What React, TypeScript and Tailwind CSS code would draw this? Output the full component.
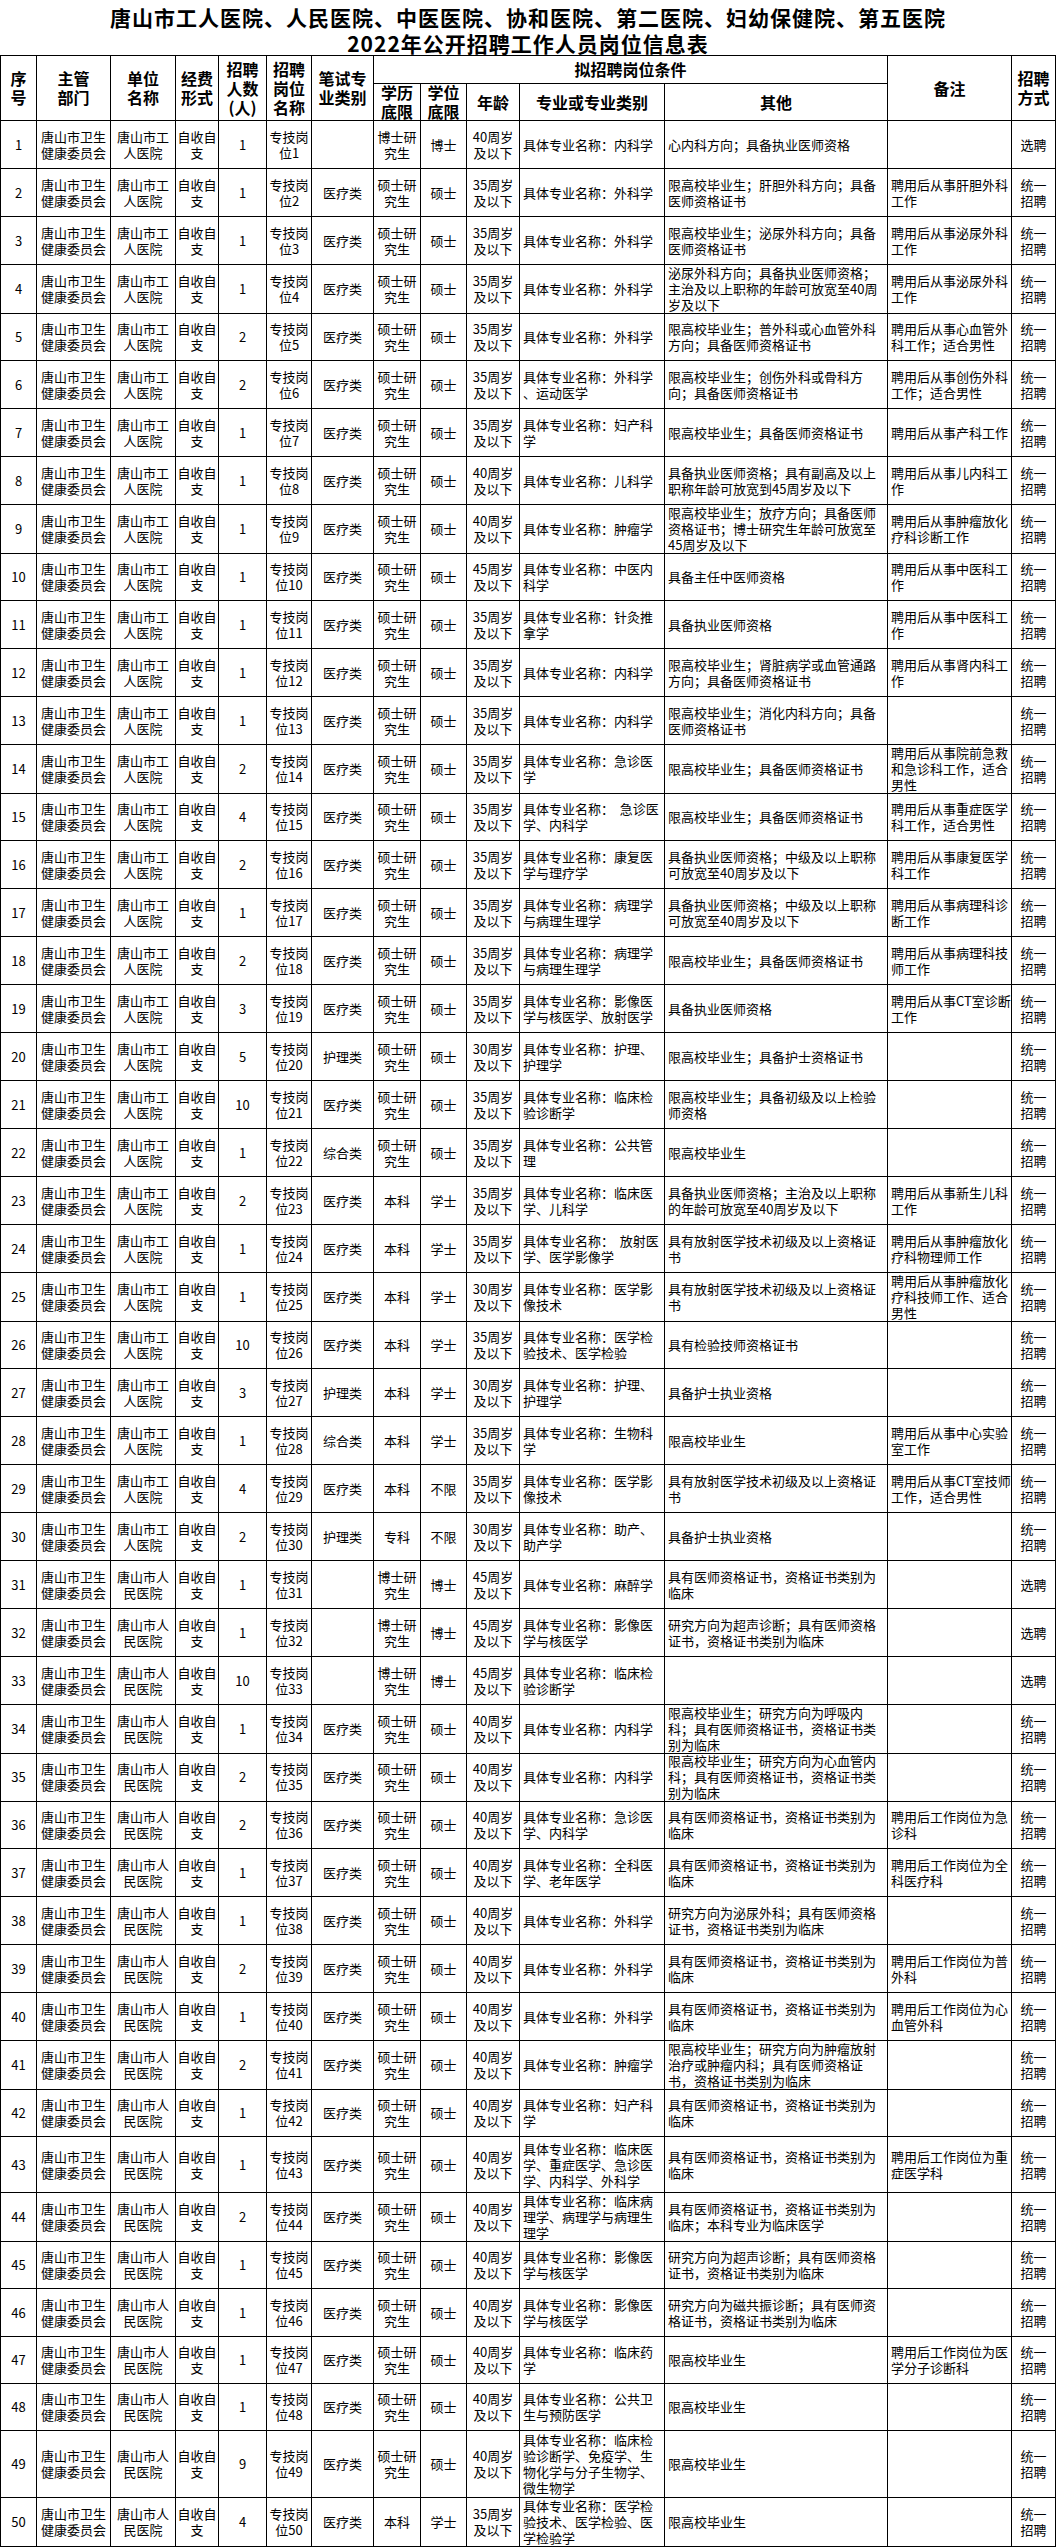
import React from "react";

type Row = [number, string, string, number, string, string, string, string];

const M = "具体专业名称：";
const LC = "具有医师资格证书，资格证书类别为|临床";

const DATA: Row[] = [
  [1, "", "B", 40, M + "内科学", "心内科方向；具备执业医师资格", "", "X"],
  [1, "医疗类", "S", 35, M + "外科学", "限高校毕业生；肝胆外科方向；具备|医师资格证书", "聘用后从事肝胆外科|工作", "T"],
  [1, "医疗类", "S", 35, M + "外科学", "限高校毕业生；泌尿外科方向；具备|医师资格证书", "聘用后从事泌尿外科|工作", "T"],
  [1, "医疗类", "S", 35, M + "外科学", "泌尿外科方向；具备执业医师资格；|主治及以上职称的年龄可放宽至40周|岁及以下", "聘用后从事泌尿外科|工作", "T"],
  [2, "医疗类", "S", 35, M + "外科学", "限高校毕业生；普外科或心血管外科|方向；具备医师资格证书", "聘用后从事心血管外|科工作；适合男性", "T"],
  [2, "医疗类", "S", 35, M + "外科学|、运动医学", "限高校毕业生；创伤外科或骨科方|向；具备医师资格证书", "聘用后从事创伤外科|工作；适合男性", "T"],
  [1, "医疗类", "S", 35, M + "妇产科|学", "限高校毕业生；具备医师资格证书", "聘用后从事产科工作", "T"],
  [1, "医疗类", "S", 40, M + "儿科学", "具备执业医师资格；具有副高及以上|职称年龄可放宽到45周岁及以下", "聘用后从事儿内科工|作", "T"],
  [1, "医疗类", "S", 40, M + "肿瘤学", "限高校毕业生；放疗方向；具备医师|资格证书；博士研究生年龄可放宽至|45周岁及以下", "聘用后从事肿瘤放化|疗科诊断工作", "T"],
  [1, "医疗类", "S", 45, M + "中医内|科学", "具备主任中医师资格", "聘用后从事中医科工|作", "T"],
  [1, "医疗类", "S", 35, M + "针灸推|拿学", "具备执业医师资格", "聘用后从事中医科工|作", "T"],
  [1, "医疗类", "S", 35, M + "内科学", "限高校毕业生；肾脏病学或血管通路|方向；具备医师资格证书", "聘用后从事肾内科工|作", "T"],
  [1, "医疗类", "S", 35, M + "内科学", "限高校毕业生；消化内科方向；具备|医师资格证书", "", "T"],
  [2, "医疗类", "S", 35, M + "急诊医|学", "限高校毕业生；具备医师资格证书", "聘用后从事院前急救|和急诊科工作，适合|男性", "T"],
  [4, "医疗类", "S", 35, M + "  急诊医|学、内科学", "限高校毕业生；具备医师资格证书", "聘用后从事重症医学|科工作，适合男性", "T"],
  [2, "医疗类", "S", 35, M + "康复医|学与理疗学", "具备执业医师资格；中级及以上职称|可放宽至40周岁及以下", "聘用后从事康复医学|科工作", "T"],
  [1, "医疗类", "S", 35, M + "病理学|与病理生理学", "具备执业医师资格；中级及以上职称|可放宽至40周岁及以下", "聘用后从事病理科诊|断工作", "T"],
  [2, "医疗类", "S", 35, M + "病理学|与病理生理学", "限高校毕业生；具备医师资格证书", "聘用后从事病理科技|师工作", "T"],
  [3, "医疗类", "S", 35, M + "影像医|学与核医学、放射医学", "具备执业医师资格", "聘用后从事CT室诊断|工作", "T"],
  [5, "护理类", "S", 30, M + "护理、|护理学", "限高校毕业生；具备护士资格证书", "", "T"],
  [10, "医疗类", "S", 35, M + "临床检|验诊断学", "限高校毕业生；具备初级及以上检验|师资格", "", "T"],
  [1, "综合类", "S", 35, M + "公共管|理", "限高校毕业生", "", "T"],
  [2, "医疗类", "K", 35, M + "临床医|学、儿科学", "具备执业医师资格；主治及以上职称|的年龄可放宽至40周岁及以下", "聘用后从事新生儿科|工作", "T"],
  [1, "医疗类", "K", 35, M + "  放射医|学、医学影像学", "具有放射医学技术初级及以上资格证|书", "聘用后从事肿瘤放化|疗科物理师工作", "T"],
  [1, "医疗类", "K", 30, M + "医学影|像技术", "具有放射医学技术初级及以上资格证|书", "聘用后从事肿瘤放化|疗科技师工作、适合|男性", "T"],
  [10, "医疗类", "K", 35, M + "医学检|验技术、医学检验", "具有检验技师资格证书", "", "T"],
  [3, "护理类", "K", 30, M + "护理、|护理学", "具备护士执业资格", "", "T"],
  [1, "综合类", "K", 35, M + "生物科|学", "限高校毕业生", "聘用后从事中心实验|室工作", "T"],
  [4, "医疗类", "KN", 35, M + "医学影|像技术", "具有放射医学技术初级及以上资格证|书", "聘用后从事CT室技师|工作，适合男性", "T"],
  [2, "护理类", "ZN", 30, M + "助产、|助产学", "具备护士执业资格", "", "T"],
  [1, "", "B", 45, M + "麻醉学", LC, "", "X"],
  [1, "", "B", 45, M + "影像医|学与核医学", "研究方向为超声诊断；具有医师资格|证书，资格证书类别为临床", "", "X"],
  [10, "", "B", 45, M + "临床检|验诊断学", "", "", "X"],
  [1, "医疗类", "S", 40, M + "内科学", "限高校毕业生；研究方向为呼吸内|科；具有医师资格证书，资格证书类|别为临床", "", "T"],
  [2, "医疗类", "S", 40, M + "内科学", "限高校毕业生；研究方向为心血管内|科；具有医师资格证书，资格证书类|别为临床", "", "T"],
  [2, "医疗类", "S", 40, M + "急诊医|学、内科学", LC, "聘用后工作岗位为急|诊科", "T"],
  [1, "医疗类", "S", 40, M + "全科医|学、老年医学", LC, "聘用后工作岗位为全|科医疗科", "T"],
  [1, "医疗类", "S", 40, M + "外科学", "研究方向为泌尿外科；具有医师资格|证书，资格证书类别为临床", "", "T"],
  [2, "医疗类", "S", 40, M + "外科学", LC, "聘用后工作岗位为普|外科", "T"],
  [1, "医疗类", "S", 40, M + "外科学", LC, "聘用后工作岗位为心|血管外科", "T"],
  [2, "医疗类", "S", 40, M + "肿瘤学", "限高校毕业生；研究方向为肿瘤放射|治疗或肿瘤内科；具有医师资格证|书，资格证书类别为临床", "", "T"],
  [1, "医疗类", "S", 40, M + "妇产科|学", LC, "", "T"],
  [1, "医疗类", "S", 40, M + "临床医|学、重症医学、急诊医|学、内科学、外科学", LC, "聘用后工作岗位为重|症医学科", "T"],
  [2, "医疗类", "S", 40, M + "临床病|理学、病理学与病理生|理学", "具有医师资格证书，资格证书类别为|临床；本科专业为临床医学", "", "T"],
  [1, "医疗类", "S", 40, M + "影像医|学与核医学", "研究方向为超声诊断；具有医师资格|证书，资格证书类别为临床", "", "T"],
  [1, "医疗类", "S", 40, M + "影像医|学与核医学", "研究方向为磁共振诊断；具有医师资|格证书，资格证书类别为临床", "", "T"],
  [1, "医疗类", "S", 40, M + "临床药|学", "限高校毕业生", "聘用后工作岗位为医|学分子诊断科", "T"],
  [1, "医疗类", "S", 40, M + "公共卫|生与预防医学", "限高校毕业生", "", "T"],
  [9, "医疗类", "S", 40, M + "临床检|验诊断学、免疫学、生|物化学与分子生物学、|微生物学", "限高校毕业生", "", "T"],
  [4, "医疗类", "K", 35, M + "医学检|验技术、医学检验、医|学检验学", "限高校毕业生", "", "T"],
];

const EDU: Record<string, [string, string]> = {
  B: ["博士研\n究生", "博士"],
  S: ["硕士研\n究生", "硕士"],
  K: ["本科", "学士"],
  KN: ["本科", "不限"],
  ZN: ["专科", "不限"],
};

const HEIGHT: Record<number, string> = {
  43: "h-[56px]",
  47: "h-[47px]",
  48: "h-[47px]",
  49: "h-[67px]",
  50: "h-[49px]",
};

const GRID =
  "grid grid-cols-[36px_74px_65px_43px_48px_45px_62px_47px_46px_53px_145px_223px_124px_44px]";

const br = (s: string) => s.split("|").join("\n");

function C({ children, left }: { children?: React.ReactNode; left?: boolean }) {
  return (
    <div
      className={
        left
          ? "flex items-center justify-start text-left pl-[3px] border-r border-b border-black whitespace-pre leading-[16px] overflow-visible"
          : "flex items-center justify-center text-center border-r border-b border-black whitespace-pre leading-[16px] overflow-visible"
      }
    >
      {children}
    </div>
  );
}

function H({ children, cls }: { children?: React.ReactNode; cls?: string }) {
  return (
    <div
      className={
        "flex items-center justify-center text-center border-r border-b border-black whitespace-pre leading-[19px] font-bold text-[16px] " +
        (cls || "")
      }
    >
      {children}
    </div>
  );
}

export default function App() {
  return (
    <div className="w-[1056px] bg-white text-black font-['Noto_Sans_CJK_SC',sans-serif]">
      <div className="h-[55px] pt-[4px] flex flex-col items-center font-bold text-[21px] tracking-[1px] leading-[26px]">
        <div className="h-[26px]">唐山市工人医院、人民医院、中医医院、协和医院、第二医院、妇幼保健院、第五医院</div>
        <div className="h-[25px]">2022年公开招聘工作人员岗位信息表</div>
      </div>
      <div className="border-l border-t border-black">
        <div className={GRID + " grid-rows-[28px_37px]"}>
          <H cls="row-span-2">{"序\n号"}</H>
          <H cls="row-span-2">{"主管\n部门"}</H>
          <H cls="row-span-2">{"单位\n名称"}</H>
          <H cls="row-span-2">{"经费\n形式"}</H>
          <H cls="row-span-2">{"招聘\n人数\n(人)"}</H>
          <H cls="row-span-2">{"招聘\n岗位\n名称"}</H>
          <H cls="row-span-2">{"笔试专\n业类别"}</H>
          <H cls="col-span-5">拟招聘岗位条件</H>
          <H cls="row-span-2">备注</H>
          <H cls="row-span-2">{"招聘\n方式"}</H>
          <H>{"学历\n底限"}</H>
          <H>{"学位\n底限"}</H>
          <H>年龄</H>
          <H>专业或专业类别</H>
          <H>其他</H>
        </div>
        <div className="text-[13px]">
          {DATA.map((r, i) => {
            const no = i + 1;
            const [cnt, cat, ek, age, major, other, note, method] = r;
            const [edu, deg] = EDU[ek];
            return (
              <div key={no} className={GRID + " " + (HEIGHT[no] || "h-[48px]")}>
                <C>{no}</C>
                <C>{"唐山市卫生\n健康委员会"}</C>
                <C>{no <= 30 ? "唐山市工\n人医院" : "唐山市人\n民医院"}</C>
                <C>{"自收自\n支"}</C>
                <C>{cnt}</C>
                <C>{"专技岗\n位" + no}</C>
                <C>{cat}</C>
                <C>{edu}</C>
                <C>{deg}</C>
                <C>{age + "周岁\n及以下"}</C>
                <C left>{br(major)}</C>
                <C left>{br(other)}</C>
                <C left>{br(note)}</C>
                <C>{method === "X" ? "选聘" : "统一\n招聘"}</C>
              </div>
            );
          })}
        </div>
      </div>
    </div>
  );
}
